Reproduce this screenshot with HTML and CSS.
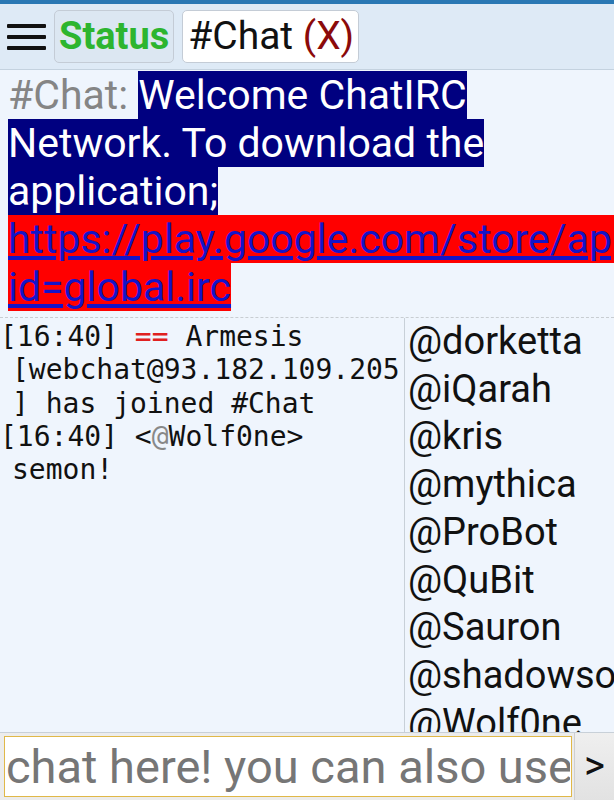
FILE: index.html
```html
<!DOCTYPE html>
<html>
	<head>
		<meta charset="UTF-8">
		<title>#Chat</title>
		<link rel="stylesheet" href="styles.css">
	</head>
	<body>
		<div class="topbar"></div>
		<div class="header">
			<div class="menu">
				<span></span>
				<span></span>
				<span></span>
			</div>
			<div class="tab status">Status</div>
			<div class="tab active">#Chat <span class="close">(X)</span></div>
		</div>
		<div class="topic">
			<span class="chan">#Chat:</span>
			<span class="hl">Welcome ChatIRC Network. To download the application;</span>
			<a class="link" href="#">https://play.google.com/store/apps/details?<wbr>id=global.irc</a>
		</div>
		<div class="main">
			<div class="chat">
				<div class="line">[16:40] <span class="join">==</span> Armesis [webchat@93.182.109.205] has joined #Chat</div>
				<div class="line">[16:40] &lt;<span class="op">@</span>Wolf0ne&gt; semon!</div>
			</div>
			<div class="nicks">
				<div>@dorketta</div>
				<div>@iQarah</div>
				<div>@kris</div>
				<div>@mythica</div>
				<div>@ProBot</div>
				<div>@QuBit</div>
				<div>@Sauron</div>
				<div>@shadowsoft</div>
				<div>@Wolf0ne</div>
			</div>
		</div>
		<div class="bottom">
			<input class="input" type="text" placeholder="chat here! you can also use /commands">
			<div class="send">&gt;</div>
		</div>
	</body>
</html>
```

FILE: styles.css
```css
html,body{
	margin: 0;
	height: 100%;
}
body{
	font-family: Roboto, "Liberation Sans", sans-serif;
	font-size: 38px;
	background-color: #eff5fd;
	display: flex;
	flex-direction: column;
	overflow: hidden;
}
.topbar{
	height: 4px;
	background-color: #2a78b4;
}
.header{
	height: 66px;
	box-sizing: border-box;
	display: flex;
	align-items: center;
	gap: 8px;
	padding-left: 7px;
	background-color: #deeaf6;
	border-bottom: 1px solid #c4d2df;
}
.menu{
	width: 39px;
	display: flex;
	flex-direction: column;
	gap: 7px;
}
.menu span{
	display: block;
	height: 4px;
	background-color: #111;
	border-radius: 1px;
}
.tab{
	height: 53px;
	box-sizing: border-box;
	padding: 0 4px;
	line-height: 51px;
	border-radius: 5px;
	border: 1px solid #c4ccd6;
	white-space: nowrap;
	font-size: 39px;
}
.status{
	background-color: #dce7f2;
	color: #2db52f;
	font-weight: bold;
	font-size: 38px;
}
.active{
	background-color: #fff;
	color: #111;
	padding: 0 4px 0 5px;
}
.close{
	color: #8b0a0a;
}
.topic{
	padding: 1px 0 6px 8px;
	line-height: 48px;
	font-size: 41px;
	border-bottom: 1px dashed #c8cdd2;
	overflow: hidden;
}
.chan{
	color: #858585;
}
.hl{
	background-color: #000080;
	color: #fff;
}
.link{
	background-color: #ff0000;
	color: #1414c8;
	text-decoration: underline;
}
.main{
	flex: 1;
	display: flex;
	overflow: hidden;
}
.chat{
	width: 404px;
	flex-shrink: 0;
	padding-top: 2px;
	font-family: "DejaVu Sans Mono", monospace;
	font-size: 28px;
	line-height: 33.3px;
	color: #111;
}
.line{
	padding-left: 12px;
	text-indent: -12px;
	overflow-wrap: break-word;
}
.join{
	color: #e02020;
}
.op{
	color: #888;
}
.nicks{
	flex: 1;
	border-left: 1px solid #c8d0d8;
	padding-left: 3px;
	line-height: 47.7px;
	white-space: nowrap;
	overflow: hidden;
	color: #111;
}
.bottom{
	display: flex;
	height: 68px;
	box-sizing: border-box;
	padding: 3px 0 3px 4px;
	gap: 2px;
	background-color: #ececec;
	border-top: 1px solid #c8d0d8;
}
.input{
	width: 568px;
	box-sizing: border-box;
	margin: 0;
	padding: 0 1px;
	border: 1px solid #e0b848;
	background-color: #fff;
	font-family: Roboto, "Liberation Sans", sans-serif;
	font-size: 47px;
	color: #111;
	outline: none;
}
.input::placeholder{
	color: #767676;
}
.send{
	flex: 1;
	margin-top: -3px;
	margin-bottom: -3px;
	border-left: 1px solid #cfcfcf;
	background: linear-gradient(#efefef, #e2e2e2);
	text-align: center;
	line-height: 66px;
	font-size: 40px;
	color: #111;
}
```
